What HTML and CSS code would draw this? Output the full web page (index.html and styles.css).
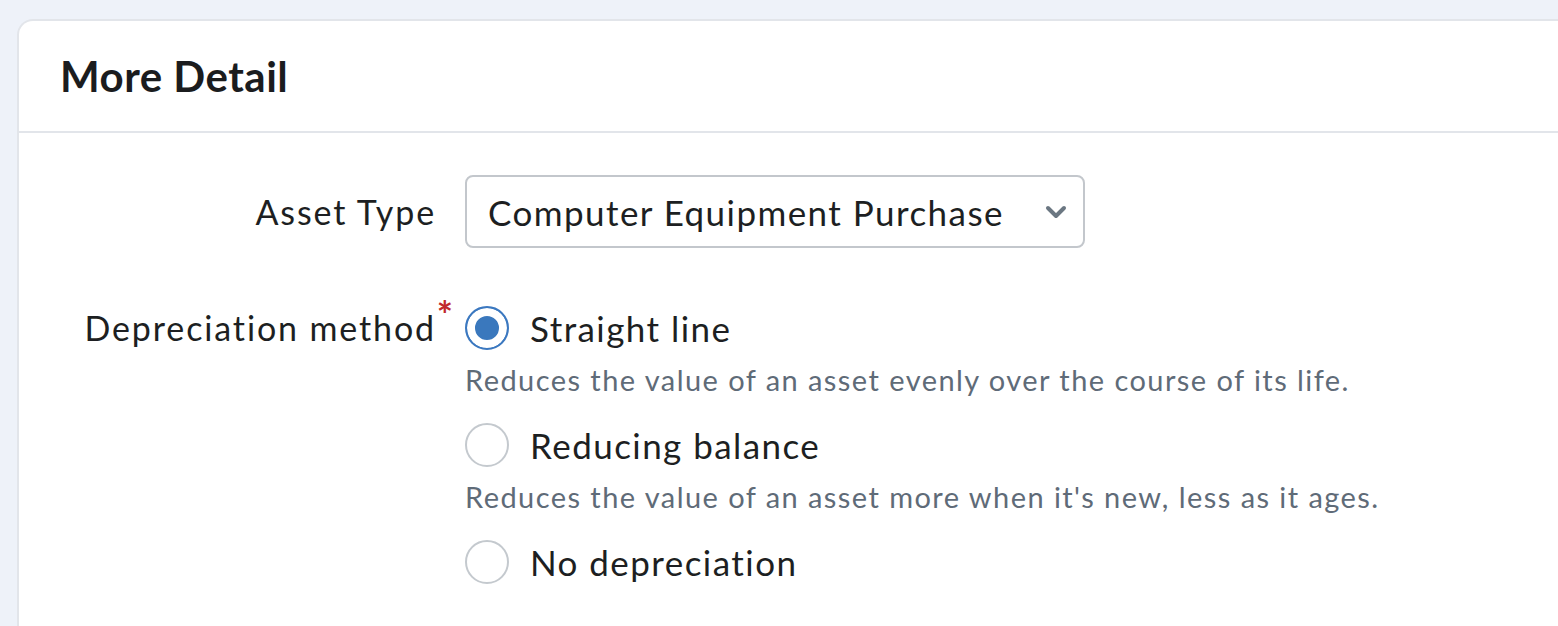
FILE: index.html
```html
<!DOCTYPE html>
<html lang="en">
<head>
  <meta charset="UTF-8">
  <meta name="viewport" content="width=device-width, initial-scale=1.0">
  <title>More Detail</title>
  <link rel="stylesheet" href="styles.css">
</head>
<body>

  <div class="card">
    <div class="card-header">
      <h2>More Detail</h2>
    </div>

    <div class="card-body">
      <!-- Asset type -->
      <div class="form-row">
        <label class="row-label" for="asset_type">Asset Type</label>
        <div class="select-wrap">
          <select id="asset_type" name="asset_type">
            <option>Computer Equipment Purchase</option>
            <option>Office Furniture</option>
            <option>Motor Vehicles</option>
          </select>
          <svg class="chevron" width="22" height="14" viewBox="0 0 22 14">
            <path d="M3 3 L11 11 L19 3" fill="none" stroke="#6b7782" stroke-width="4" stroke-linecap="round" stroke-linejoin="round"/>
          </svg>
        </div>
      </div>

      <!-- Depreciation method -->
      <div class="form-row">
        <div class="row-label required">Depreciation method</div>
        <div class="radio-group">
          <label class="radio-option">
            <input type="radio" name="method" value="straight" checked>
            <span>Straight line</span>
          </label>
          <p class="radio-desc">Reduces the value of an asset evenly over the course of its life.</p>

          <label class="radio-option">
            <input type="radio" name="method" value="reducing">
            <span>Reducing balance</span>
          </label>
          <p class="radio-desc">Reduces the value of an asset more when it's new, less as it ages.</p>

          <label class="radio-option">
            <input type="radio" name="method" value="none">
            <span>No depreciation</span>
          </label>
        </div>
      </div>
    </div>
  </div>

</body>
</html>
```

FILE: styles.css
```css
body {
  font-family: Lato, "Open Sans", sans-serif;
  letter-spacing: 0.09em;
  margin: 0;
  padding: 19px 0 0 17px;
  background-color: #eef2f9;
  color: #1d1f22;
  overflow: hidden;
}

.card {
  background-color: white;
  border: 2px solid #e2e5ea;
  border-right: none;
  border-radius: 16px 0 0 0;
  min-height: 700px;
}

.card-header {
  height: 110px;
  display: flex;
  align-items: center;
  padding-left: 41px;
  border-bottom: 2px solid #e2e5ea;
}

.card-header h2 {
  margin: 0;
  font-size: 42px;
  font-weight: 700;
  letter-spacing: 0.5px;
  color: #1b1c1e;
}

.card-body {
  padding-top: 42px;
}

.form-row {
  display: grid;
  grid-template-columns: 417px 1fr;
  column-gap: 29px;
  margin-bottom: 58px;
}

.row-label {
  text-align: right;
  font-size: 34px;
  letter-spacing: 0.055em;
  line-height: 73px;
}

.required {
  position: relative;
  line-height: 44px;
}

.required::after {
  content: "*";
  position: absolute;
  right: -17px;
  top: -14px;
  color: #c0282d;
  font-size: 38px;
  font-weight: 700;
  letter-spacing: 0;
}

.select-wrap {
  position: relative;
  width: 620px;
}

.select-wrap select {
  appearance: none;
  -webkit-appearance: none;
  width: 100%;
  height: 73px;
  padding: 0 70px 0 21px;
  font-family: inherit;
  letter-spacing: inherit;
  font-size: 35px;
  color: #1d1f22;
  background: white;
  border: 2px solid #c3c7cc;
  border-radius: 8px;
}

.chevron {
  position: absolute;
  right: 18px;
  top: 30px;
  pointer-events: none;
}

.radio-group {
  display: flex;
  flex-direction: column;
}

.radio-option {
  display: flex;
  align-items: center;
  gap: 21px;
  height: 44px;
  font-size: 35px;
  cursor: pointer;
}

.radio-option input {
  appearance: none;
  -webkit-appearance: none;
  margin: 0;
  width: 44px;
  height: 44px;
  border: 2px solid #c4c9ce;
  border-radius: 50%;
  background: white;
}

.radio-option input:checked {
  border-color: #3b78c0;
  background-color: #3a78bd;
  box-shadow: inset 0 0 0 8px white;
}

.radio-desc {
  margin: 10px 0 23px;
  font-size: 29px;
  line-height: 40px;
  color: #5f6b78;
}
```
